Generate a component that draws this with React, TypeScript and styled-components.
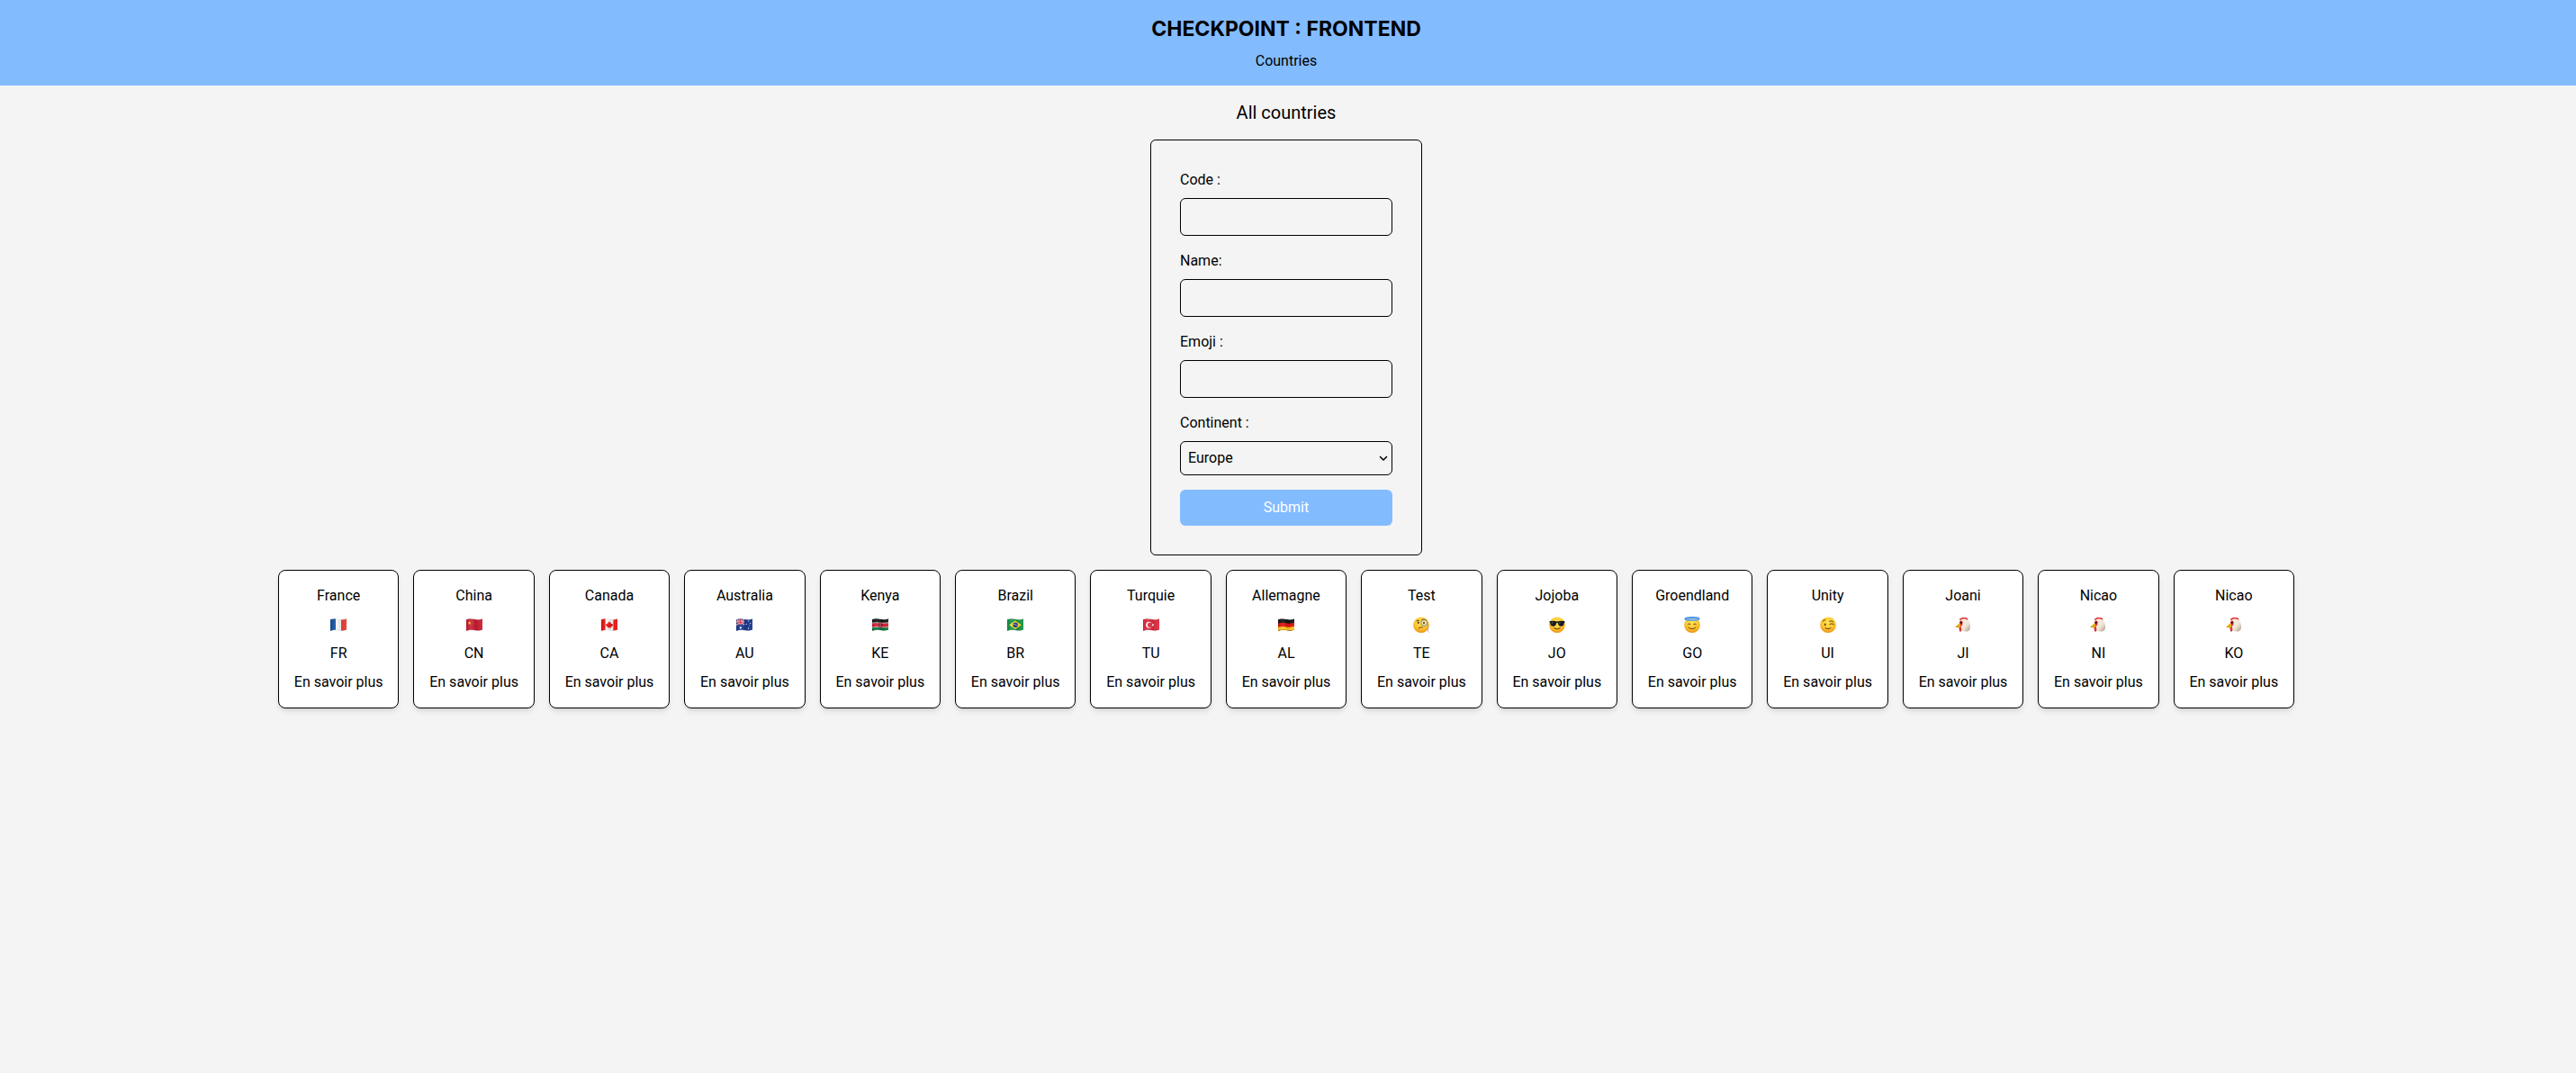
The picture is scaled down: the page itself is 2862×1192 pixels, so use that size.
import React from "react";
import styled, { createGlobalStyle } from "styled-components";

const GlobalStyle = createGlobalStyle`
  *, *::before, *::after { box-sizing: border-box; }
  body {
    margin: 0;
    background: #f4f4f4;
    color: #000;
    font-family: Roboto, "Liberation Sans", sans-serif;
    font-size: 16px;
    line-height: 24px;
  }
`;

const Page = styled.div`
  display: flex;
  flex-direction: column;
  padding-right: 4px;
`;

const Header = styled.header`
  display: flex;
  flex-direction: column;
  align-items: center;
  gap: 8px;
  padding: 16px 4px 15px 0;
  margin-right: -4px;
  background: #83bbff;
`;

const Title = styled.h1`
  margin: 0;
  font-family: Inter, "Liberation Sans", sans-serif;
  font-size: 23px;
  line-height: 32px;
  font-weight: 700;
`;

const TextLink = styled.a`
  color: inherit;
  text-decoration: none;
  white-space: nowrap;
`;

const Main = styled.main`
  display: flex;
  flex-direction: column;
  align-items: center;
  gap: 16px;
  padding: 16px;
`;

const Heading = styled.h2`
  margin: 0;
  font-size: 20px;
  line-height: 28px;
  font-weight: 400;
`;

const Form = styled.form`
  display: flex;
  flex-direction: column;
  gap: 16px;
  width: 302px;
  max-width: 100%;
  padding: 32px;
  border: 1px solid #000;
  border-radius: 6px;
`;

const Field = styled.div`
  display: flex;
  flex-direction: column;
  gap: 8px;
`;

const Input = styled.input`
  width: 100%;
  height: 42px;
  padding: 8px;
  border: 1px solid #000;
  border-radius: 6px;
  background: transparent;
  color: inherit;
  font: inherit;
`;

const SelectBox = styled.div`
  display: grid;
  align-items: center;

  > * { grid-area: 1 / 1; }

  > svg {
    justify-self: end;
    margin-right: 4px;
    pointer-events: none;
  }
`;

const Select = styled.select`
  appearance: none;
  width: 100%;
  height: 38px;
  padding: 0 24px 0 8px;
  border: 1px solid #000;
  border-radius: 6px;
  background: transparent;
  color: inherit;
  font: inherit;
`;

const Submit = styled.button`
  padding: 8px;
  border: 0;
  border-radius: 6px;
  background: #83bbff;
  color: #fff;
  font: inherit;
  cursor: pointer;
`;

const CountryList = styled.ul`
  display: grid;
  grid-template-columns: repeat(auto-fit, minmax(134px, 1fr));
  gap: 16px;
  width: 100%;
  max-width: 2240px;
  margin: 0;
  padding: 0;
  list-style: none;
`;

const Card = styled.li`
  display: flex;
  flex-direction: column;
  align-items: center;
  gap: 8px;
  padding: 16px;
  border: 1px solid #000;
  border-radius: 8px;
  background: #fff;
  box-shadow: 0 4px 6px -1px rgba(0, 0, 0, 0.1), 0 2px 4px -2px rgba(0, 0, 0, 0.1);
`;

const EmojiLine = styled.span`
  display: flex;
  align-items: center;
  height: 24px;
`;

const WAVE = "M0 3.2C3 2.2 5 2.3 9 3.1S15 3.4 18 2.4V14.4C15 15.4 13 15.9 9 15.1S3 14.8 0 15.8Z";

function Flag({ id, children }: { id: string; children: React.ReactNode }) {
  return (
    <>
      <defs>
        <clipPath id={id}><path d={WAVE} /></clipPath>
        <linearGradient id={id + "s"} x1="0" x2="1" y1="0" y2="0">
          <stop offset="0" stopColor="#000" stopOpacity=".12" />
          <stop offset=".3" stopColor="#fff" stopOpacity=".1" />
          <stop offset=".6" stopColor="#000" stopOpacity=".1" />
          <stop offset="1" stopColor="#fff" stopOpacity=".08" />
        </linearGradient>
      </defs>
      <g clipPath={`url(#${id})`}>
        {children}
        <rect width="18" height="18" fill={`url(#${id}s)`} />
      </g>
      <path d={WAVE} fill="none" stroke="#000" strokeOpacity=".18" strokeWidth=".5" />
    </>
  );
}

function Face({ id, children }: { id: string; children: React.ReactNode }) {
  return (
    <>
      <defs>
        <radialGradient id={id} cx=".5" cy=".35" r=".68">
          <stop offset="0" stopColor="#ffe453" />
          <stop offset=".6" stopColor="#fdc530" />
          <stop offset="1" stopColor="#ea8a12" />
        </radialGradient>
      </defs>
      <circle cx="9" cy="9.2" r="8.8" fill={`url(#${id})`} />
      {children}
    </>
  );
}

const INK = "#57300a";

function drawing(kind: string, id: string) {
  switch (kind) {
    case "france":
      return <Flag id={id}><rect width="18" height="18" fill="#fff" /><rect width="6" height="18" fill="#1450a0" /><rect x="12" width="6" height="18" fill="#e8392f" /></Flag>;
    case "china":
      return (
        <Flag id={id}>
          <rect width="18" height="18" fill="#cb1c33" />
          <path d="M3.6 5.2l.6 1.2 1.3.1-1 .9.3 1.4-1.2-.8-1.2.8.3-1.4-1-.9 1.3-.1Z" fill="#ffd93b" />
          <g fill="#d98a2c"><circle cx="6.6" cy="4.6" r=".4" /><circle cx="7.6" cy="5.8" r=".4" /><circle cx="7.6" cy="7.6" r=".4" /><circle cx="6.6" cy="8.9" r=".4" /></g>
        </Flag>
      );
    case "canada":
      return (
        <Flag id={id}>
          <rect width="18" height="18" fill="#fff" />
          <rect width="4.6" height="18" fill="#ee1111" /><rect x="13.4" width="4.6" height="18" fill="#ee1111" />
          <path d="M9 5l.9 1.7 1-.5-.3 2.2 1.1-1 .3.8 1.1-.1-.5 1.5.4.4-2.3 1.7.1.8-1.6-.2V14h-.4v-1.7l-1.6.2.1-.8L5 10l.4-.4-.5-1.5 1.1.1.3-.8 1.1 1-.3-2.2 1 .5Z" fill="#ee1111" />
        </Flag>
      );
    case "australia":
      return (
        <Flag id={id}>
          <rect width="18" height="18" fill="#17388f" />
          <path d="M0 3l9 6M9 3L0 9.4" stroke="#fff" strokeWidth="1.2" />
          <path d="M4.5 2v7M0 6.2h9" stroke="#fff" strokeWidth="1.8" />
          <path d="M0 3l9 6M9 3L0 9.4" stroke="#e02b45" strokeWidth=".6" />
          <path d="M4.5 2v7M0 6.2h9" stroke="#e02b45" strokeWidth="1.1" />
          <g fill="#fff"><circle cx="4.8" cy="12.4" r="1.1" /><circle cx="13.4" cy="5" r=".6" /><circle cx="11.2" cy="8.4" r=".6" /><circle cx="15.7" cy="7.5" r=".6" /><circle cx="13.4" cy="13" r=".7" /><circle cx="14.6" cy="9.6" r=".4" /></g>
        </Flag>
      );
    case "kenya":
      return (
        <Flag id={id}>
          <rect width="18" height="18" fill="#08743b" />
          <rect width="18" height="6.6" fill="#151515" />
          <path d="M-1 7.2q5-1 9-.2t11-.4v4.8q-5 1-9 .2t-11 .6Z" fill="#d51c32" stroke="#fff" strokeWidth=".6" />
          <ellipse cx="9" cy="9.3" rx="1.7" ry="3.4" fill="#a30e22" /><path d="M9 6.4v5.8" stroke="#fff" strokeWidth=".6" /><path d="M7.8 7.5v3.6M10.2 7.5v3.6" stroke="#151515" strokeWidth=".5" />
        </Flag>
      );
    case "brazil":
      return <Flag id={id}><rect width="18" height="18" fill="#149447" /><path d="M9 4.2l6.7 5-6.7 5-6.7-5Z" fill="#ffdc1f" /><circle cx="9" cy="9.2" r="2.8" fill="#27418f" /><path d="M6.4 8.6q2.8-.6 5 1.4" stroke="#fff" strokeWidth=".5" fill="none" /></Flag>;
    case "turkey":
      return <Flag id={id}><rect width="18" height="18" fill="#e22a3e" /><circle cx="6.6" cy="9.2" r="3.4" fill="#fff" /><circle cx="7.6" cy="9.2" r="2.7" fill="#e22a3e" /><path d="M9 9.2l1.2-.4.1-1.3.8 1 1.2-.4-.8 1.1.8 1.1-1.2-.4-.8 1-.1-1.3Z" fill="#fff" /></Flag>;
    case "germany":
      return (
        <Flag id={id}>
          <rect width="18" height="18" fill="#111" />
          <path d="M0 7.4q5-1.3 9-.2t9-.6V18H0Z" fill="#e3100c" />
          <path d="M0 11.6q5-1.3 9-.2t9-.6V18H0Z" fill="#ffc91a" />
        </Flag>
      );
    case "monocle":
      return (
        <Face id={id}>
          <path d="M3.8 4.6q1.6-1.2 3 .1M9.6 3.6q2.4-1.6 4.6.1" fill="none" stroke={INK} strokeWidth=".9" strokeLinecap="round" />
          <ellipse cx="5.8" cy="6.8" rx=".9" ry="1.3" fill={INK} />
          <circle cx="12.2" cy="7" r="3.4" fill="#f6edc4" fillOpacity=".75" stroke="#7f8585" strokeWidth="1" />
          <ellipse cx="12" cy="7.1" rx=".9" ry="1.3" fill={INK} />
          <path d="M6.2 12.7q2-1.1 4.2-.7" fill="none" stroke={INK} strokeWidth=".9" strokeLinecap="round" />
          <path d="M15.6 7.6q1.8 4 .9 6.5t.9 3.4" fill="none" stroke="#8f9292" strokeWidth=".6" />
        </Face>
      );
    case "cool":
      return (
        <Face id={id}>
          <path d="M.6 5.1Q5 4.2 9 5.4q4-1.2 8.4-.3v1.3l-.7.5q-.2 3.8-3.4 3.8-3 0-3.6-3.6-.7-.5-1.4 0-.6 3.6-3.6 3.6-3.2 0-3.4-3.8l-.7-.5Z" fill="#17191d" />
          <path d="M2.8 6.3l2 .1-1.6 2.2M11.2 6.3l2 .1-1.6 2.2" fill="#59616b" />
          <path d="M5.6 12.8q3.4 2.6 6.8 0" fill="none" stroke={INK} strokeWidth="1" strokeLinecap="round" />
        </Face>
      );
    case "halo":
      return (
        <Face id={id}>
          <path d="M4.6 8.9q1.2-2.8 2.4 0M10.8 8.9q1.2-2.8 2.4 0M5 12q4 3.4 8 0" fill="none" stroke={INK} strokeWidth=".9" strokeLinecap="round" />
          <ellipse cx="9" cy="2.4" rx="8" ry="1.7" fill="#9fbfd8" stroke="#4f9df0" strokeWidth="1.4" />
          <path d="M1.4 2.2Q9-.4 16.6 2.2" fill="none" stroke="#3979dd" strokeWidth=".7" />
        </Face>
      );
    case "wink":
      return (
        <Face id={id}>
          <path d="M3 5.4q.9-2 2.8-1.8M10.6 5.3q2.4-1.4 4 .4M10.8 8.4q2.2-1.4 4.4.1" fill="none" stroke={INK} strokeWidth=".9" strokeLinecap="round" />
          <ellipse cx="5.8" cy="8.7" rx=".9" ry="1.3" fill={INK} />
          <path d="M6 12.8q3 2 6 0" fill="none" stroke={INK} strokeWidth=".9" strokeLinecap="round" />
        </Face>
      );
    default:
      return (
        <>
          <defs>
            <linearGradient id={id} x1="0" x2="1" y1="0" y2="1">
              <stop offset="0" stopColor="#fbf4e8" /><stop offset=".6" stopColor="#efe4d4" /><stop offset="1" stopColor="#a79684" />
            </linearGradient>
          </defs>
          <path d="M5.4 4.2C4.6 2 6.2 1.4 7 1.8 7.6.4 10 .4 10.6 1.2 12.4.4 14.6 1.6 14.4 4Z" fill="#e2383a" />
          <path d="M5.2 7.2C5.4 3.9 7.8 2.6 10.4 2.6c4.2 0 6.6 3.8 6.6 8.8 0 3.6-1.6 5-4.8 5-2.8 0-5.2-.6-5.6-2.4Z" fill={`url(#${id})`} />
          <path d="M5.2 6.4C5.8 3.8 8.8 4 8.6 7 8.5 9.2 7.8 10.2 6.6 10.8L7.4 14.6C7.4 17 5.6 17.4 4.9 15.4L4.4 12Z" fill="#dc3136" />
          <path d="M5.4 7.4Q3.6 7.6 2.6 9.4L.2 11.6Q2 12.6 5.6 12Q7 9.6 5.4 7.4Z" fill="#edb51f" />
          <path d="M.8 11.6l4.6-1.2" stroke="#ad7712" strokeWidth=".6" />
          <circle cx="6.8" cy="6.6" r="1.2" fill="#26130f" />
        </>
      );
  }
}

function Emoji({ kind, id }: { kind: string; id: string }) {
  return (
    <EmojiLine>
      <svg width="18" height="18" viewBox="0 0 18 18" role="img" aria-label={kind}>
        {drawing(kind, id)}
      </svg>
    </EmojiLine>
  );
}

const countries = [
  { name: "France", code: "FR", emoji: "france" },
  { name: "China", code: "CN", emoji: "china" },
  { name: "Canada", code: "CA", emoji: "canada" },
  { name: "Australia", code: "AU", emoji: "australia" },
  { name: "Kenya", code: "KE", emoji: "kenya" },
  { name: "Brazil", code: "BR", emoji: "brazil" },
  { name: "Turquie", code: "TU", emoji: "turkey" },
  { name: "Allemagne", code: "AL", emoji: "germany" },
  { name: "Test", code: "TE", emoji: "monocle" },
  { name: "Jojoba", code: "JO", emoji: "cool" },
  { name: "Groendland", code: "GO", emoji: "halo" },
  { name: "Unity", code: "UI", emoji: "wink" },
  { name: "Joani", code: "JI", emoji: "chicken" },
  { name: "Nicao", code: "NI", emoji: "chicken" },
  { name: "Nicao", code: "KO", emoji: "chicken" },
];

const textFields = [
  { id: "code", label: "Code :" },
  { id: "name", label: "Name:" },
  { id: "emoji", label: "Emoji :" },
];

export default function App() {
  return (
    <>
      <GlobalStyle />
      <Page>
        <Header>
          <Title>CHECKPOINT : FRONTEND</Title>
          <TextLink href="#countries">Countries</TextLink>
        </Header>
        <Main>
          <Heading>All countries</Heading>
          <Form onSubmit={(event) => event.preventDefault()}>
            {textFields.map((field) => (
              <Field key={field.id}>
                <label htmlFor={field.id}>{field.label}</label>
                <Input id={field.id} name={field.id} type="text" />
              </Field>
            ))}
            <Field>
              <label htmlFor="continent">Continent :</label>
              <SelectBox>
                <Select id="continent" name="continent">
                  <option>Europe</option>
                </Select>
                <svg width="12" height="12" viewBox="0 0 12 12" aria-hidden="true">
                  <path d="M2.5 4.5L6 8l3.5-3.5" fill="none" stroke="#000" strokeWidth="1.5" strokeLinecap="round" strokeLinejoin="round" />
                </svg>
              </SelectBox>
            </Field>
            <Submit type="submit">Submit</Submit>
          </Form>
          <CountryList id="countries">
            {countries.map((country) => (
              <Card key={country.code}>
                <span>{country.name}</span>
                <Emoji kind={country.emoji} id={"emoji-" + country.code} />
                <span>{country.code}</span>
                <TextLink href={"#" + country.code}>En savoir plus</TextLink>
              </Card>
            ))}
          </CountryList>
        </Main>
      </Page>
    </>
  );
}
